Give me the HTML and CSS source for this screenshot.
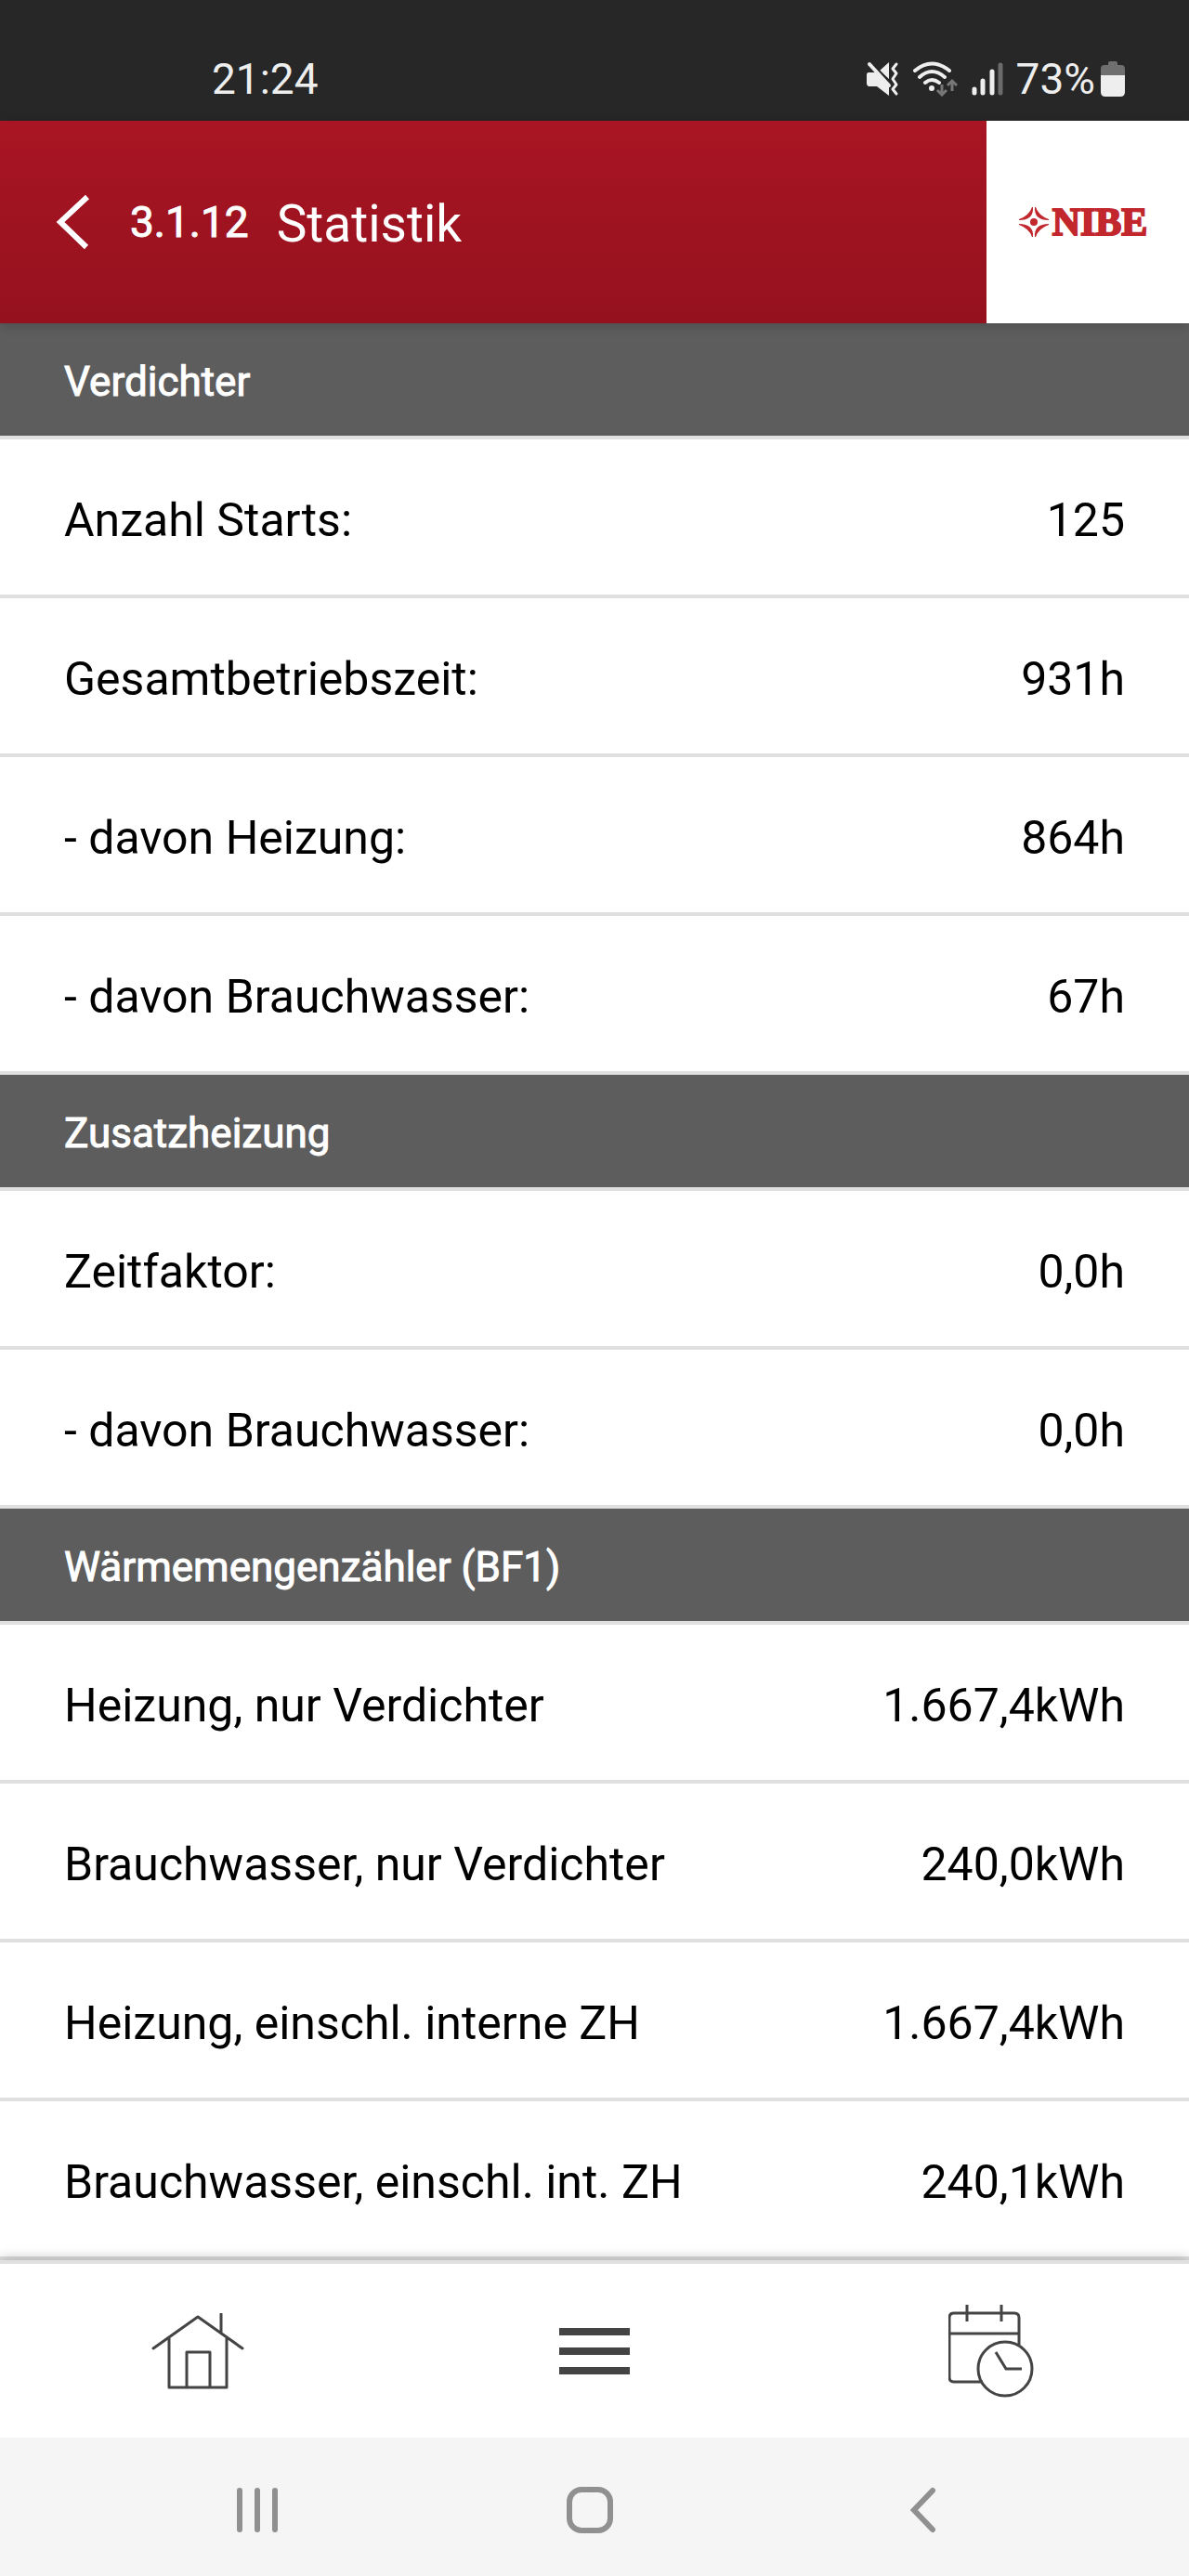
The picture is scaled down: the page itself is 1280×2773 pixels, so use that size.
FILE: index.html
```html
<!DOCTYPE html>
<html lang="de">
<head>
  <meta charset="UTF-8">
  <meta name="viewport" content="width=device-width, initial-scale=1">
  <title>Statistik</title>
  <link rel="stylesheet" href="styles.css">
</head>
<body>

  <div class="status-bar">
    <span class="time">21:24</span>
    <div class="status-icons">
      <!-- muted / vibrate -->
      <svg width="36" height="38" viewBox="0 0 36 38">
        <path d="M3 12h7l15 13v12L12 27H3q-2-1-2-3v-9q0-3 2-3zM15 10l10-9v18z" fill="#eee"/>
        <path d="M6 2l21 22" stroke="#272727" stroke-width="3"/>
        <path d="M4 3l21 23" stroke="#eee" stroke-width="4" stroke-linecap="round"/>
        <path d="M33 3l-4 5 4 5-4 6 4 6-4 5 4 5" stroke="#eee" stroke-width="3" fill="none" stroke-linecap="round" stroke-linejoin="round"/>
      </svg>
      <!-- wifi -->
      <svg width="50" height="38" viewBox="0 0 50 38">
        <g fill="none" stroke="#eee" stroke-width="4" stroke-linecap="round">
          <path d="M3 10q18-15 37 0M8 17q13-12 27 0M14 23q7-6 15 0"/>
        </g>
        <circle cx="21" cy="29" r="3" fill="#eee"/>
        <path d="M32 25v10M27 31l5 5 5-5M43 32V21M38 26l5-5 5 5" fill="none" stroke="#777" stroke-width="3"/>
      </svg>
      <!-- signal -->
      <svg width="34" height="38" viewBox="0 0 34 38">
        <g stroke="#eee" stroke-width="5" stroke-linecap="round">
          <path d="M3 30v4M12 21v13M22 11v23"/>
          <path d="M31 4v30" stroke="#6b6b6b"/>
        </g>
      </svg>
      <span class="battery-level">73%</span>
      <!-- battery -->
      <svg width="26" height="38" viewBox="0 0 26 38">
        <path d="M8 4V2q0-2 2-2h6q2 0 2 2v2h4q4 0 4 4v8H0V8q0-4 4-4z" fill="#6f6f6f"/>
        <path d="M0 15h26v18q0 5-5 5H5q-5 0-5-5z" fill="#eee"/>
      </svg>
    </div>
  </div>

  <header class="header">
    <a class="back" href="#" aria-label="Zurück">
      <svg width="38" height="60" viewBox="0 0 38 60">
        <path d="M34 3L5 30l28 27" fill="none" stroke="#fff" stroke-width="6"/>
      </svg>
    </a>
    <span class="menu-number">3.1.12</span>
    <h1>Statistik</h1>
    <div class="logo">
      <svg width="32" height="32" viewBox="0 0 32 32">
        <g fill="#c1272d">
          <path d="M15 0q1 14-15 14v-1Q11 9 14 0z"/>
          <path d="M17 0q-1 14 15 14v-1Q21 9 18 0z"/>
          <path d="M15 32q1-14-15-14v1q11 4 14 13z"/>
          <path d="M17 32q-1-14 15-14v1q-11 4-14 13z"/>
          <circle cx="16" cy="16" r="4"/>
        </g>
      </svg>
      <span>NIBE</span>
    </div>
  </header>

  <main>
    <table class="stats">
      <thead>
        <tr><th colspan="2">Verdichter</th></tr>
      </thead>
      <tbody>
        <tr><th scope="row">Anzahl Starts:</th><td>125</td></tr>
        <tr><th scope="row">Gesamtbetriebszeit:</th><td>931h</td></tr>
        <tr><th scope="row">- davon Heizung:</th><td>864h</td></tr>
        <tr><th scope="row">- davon Brauchwasser:</th><td>67h</td></tr>
      </tbody>
    </table>

    <table class="stats">
      <thead>
        <tr><th colspan="2">Zusatzheizung</th></tr>
      </thead>
      <tbody>
        <tr><th scope="row">Zeitfaktor:</th><td>0,0h</td></tr>
        <tr><th scope="row">- davon Brauchwasser:</th><td>0,0h</td></tr>
      </tbody>
    </table>

    <table class="stats">
      <thead>
        <tr><th colspan="2">Wärmemengenzähler (BF1)</th></tr>
      </thead>
      <tbody>
        <tr><th scope="row">Heizung, nur Verdichter</th><td>1.667,4kWh</td></tr>
        <tr><th scope="row">Brauchwasser, nur Verdichter</th><td>240,0kWh</td></tr>
        <tr><th scope="row">Heizung, einschl. interne ZH</th><td>1.667,4kWh</td></tr>
        <tr><th scope="row">Brauchwasser, einschl. int. ZH</th><td>240,1kWh</td></tr>
      </tbody>
    </table>
  </main>

  <nav class="tabs">
    <a href="#" aria-label="Start">
      <svg width="100" height="82" viewBox="0 19 100 82">
        <g fill="none" stroke="#444" stroke-width="3" stroke-linecap="round" stroke-linejoin="round">
          <path d="M2 57l48-34 48 34M75 20v20M19 46v53h62V46M38 99V61h25v38"/>
        </g>
      </svg>
    </a>
    <a href="#" aria-label="Menü">
      <svg width="76" height="50" viewBox="0 0 76 50">
        <path d="M0 0h76v8H0zM0 21h76v8H0zM0 42h76v8H0z" fill="#444"/>
      </svg>
    </a>
    <a href="#" aria-label="Zeitplan">
      <svg width="92" height="100" viewBox="0 0 92 100">
        <g fill="none" stroke="#444" stroke-width="3">
          <path d="M76 43V14q0-5-5-5H6q-5 0-5 5v64q0 5 5 5h31M1 31h75M20 0v18M57 0v18"/>
          <circle cx="61" cy="69" r="29"/>
          <path d="M51 51l11 18h17"/>
        </g>
      </svg>
    </a>
  </nav>

  <div class="system-nav">
    <button aria-label="Letzte Apps">
      <svg width="46" height="50" viewBox="0 0 46 50">
        <path d="M4 4v42M23 4v42M42 4v42" stroke="#909090" stroke-width="6" stroke-linecap="round"/>
      </svg>
    </button>
    <button aria-label="Startbildschirm">
      <svg width="50" height="50" viewBox="0 0 50 50">
        <rect x="3" y="3" width="44" height="44" rx="13" fill="none" stroke="#909090" stroke-width="6"/>
      </svg>
    </button>
    <button aria-label="Zurück">
      <svg width="28" height="50" viewBox="0 0 28 50">
        <path d="M24 4L4 25l20 21" fill="none" stroke="#909090" stroke-width="6" stroke-linecap="round"/>
      </svg>
    </button>
  </div>

</body>
</html>
```

FILE: styles.css
```css
* {
  box-sizing: border-box;
}
body {
  margin: 0;
  min-height: 100vh;
  display: flex;
  flex-direction: column;
  font-family: Roboto, sans-serif;
  font-size: 50px;
  color: #000;
  background: #fff;
}
svg {
  display: block;
  flex: none;
}
.status-bar {
  height: 130px;
  padding: 40px 69px 0 228px;
  display: flex;
  align-items: center;
  justify-content: space-between;
  background: #272727;
  color: #eee;
  font-size: 46px;
}
.status-icons {
  display: flex;
  align-items: center;
  gap: 14px;
}
.battery-level {
  margin-right: -8px;
}
.header {
  position: relative;
  height: 218px;
  padding-left: 60px;
  display: flex;
  align-items: center;
  background: linear-gradient(#a91523, #95111e);
  color: #fff;
  box-shadow: 0 2px 12px rgba(0, 0, 0, 0.2);
}
.menu-number {
  margin: 0 30px 0 42px;
  font-size: 46px;
  -webkit-text-stroke: 1px #fff;
}
.header h1 {
  margin: 0;
  padding-top: 4px;
  font-size: 55px;
  font-weight: 400;
}
.logo {
  width: 218px;
  height: 100%;
  margin-left: auto;
  padding-right: 10px;
  display: flex;
  align-items: center;
  justify-content: center;
  gap: 4px;
  background: #fff;
  color: #c1272d;
  font-family: "Liberation Serif", serif;
  font-size: 42px;
  font-weight: 700;
  -webkit-text-stroke: 2px #c1272d;
}
main {
  flex: 1;
}
.stats {
  width: 100%;
  border-spacing: 0;
}
.stats th,
.stats td {
  height: 171px;
  padding: 6px 69px 0;
  border-bottom: 4px solid #e0e0e0;
  font-weight: 400;
  text-align: left;
}
.stats td {
  padding-left: 0;
  text-align: right;
}
.stats thead th {
  height: 125px;
  padding-top: 4px;
  background: #5d5d5d;
  background-clip: padding-box;
  color: #fff;
  font-size: 44px;
  -webkit-text-stroke: 1px #fff;
}
.tabs {
  position: relative;
  height: 191px;
  display: grid;
  grid-template-columns: repeat(3, 1fr);
  background: #fff;
  border-top: 4px solid #e0e0e0;
  box-shadow: 0 -3px 12px rgba(0, 0, 0, 0.2);
}
.tabs a {
  display: flex;
  align-items: center;
  justify-content: center;
}
.system-nav {
  position: relative;
  height: 149px;
  padding: 0 107px 0 98px;
  display: grid;
  grid-template-columns: repeat(3, 1fr);
  background: #f5f5f5;
}
.system-nav button {
  padding: 6px 0 0;
  display: flex;
  align-items: center;
  justify-content: center;
  border: none;
  background: none;
}
```
